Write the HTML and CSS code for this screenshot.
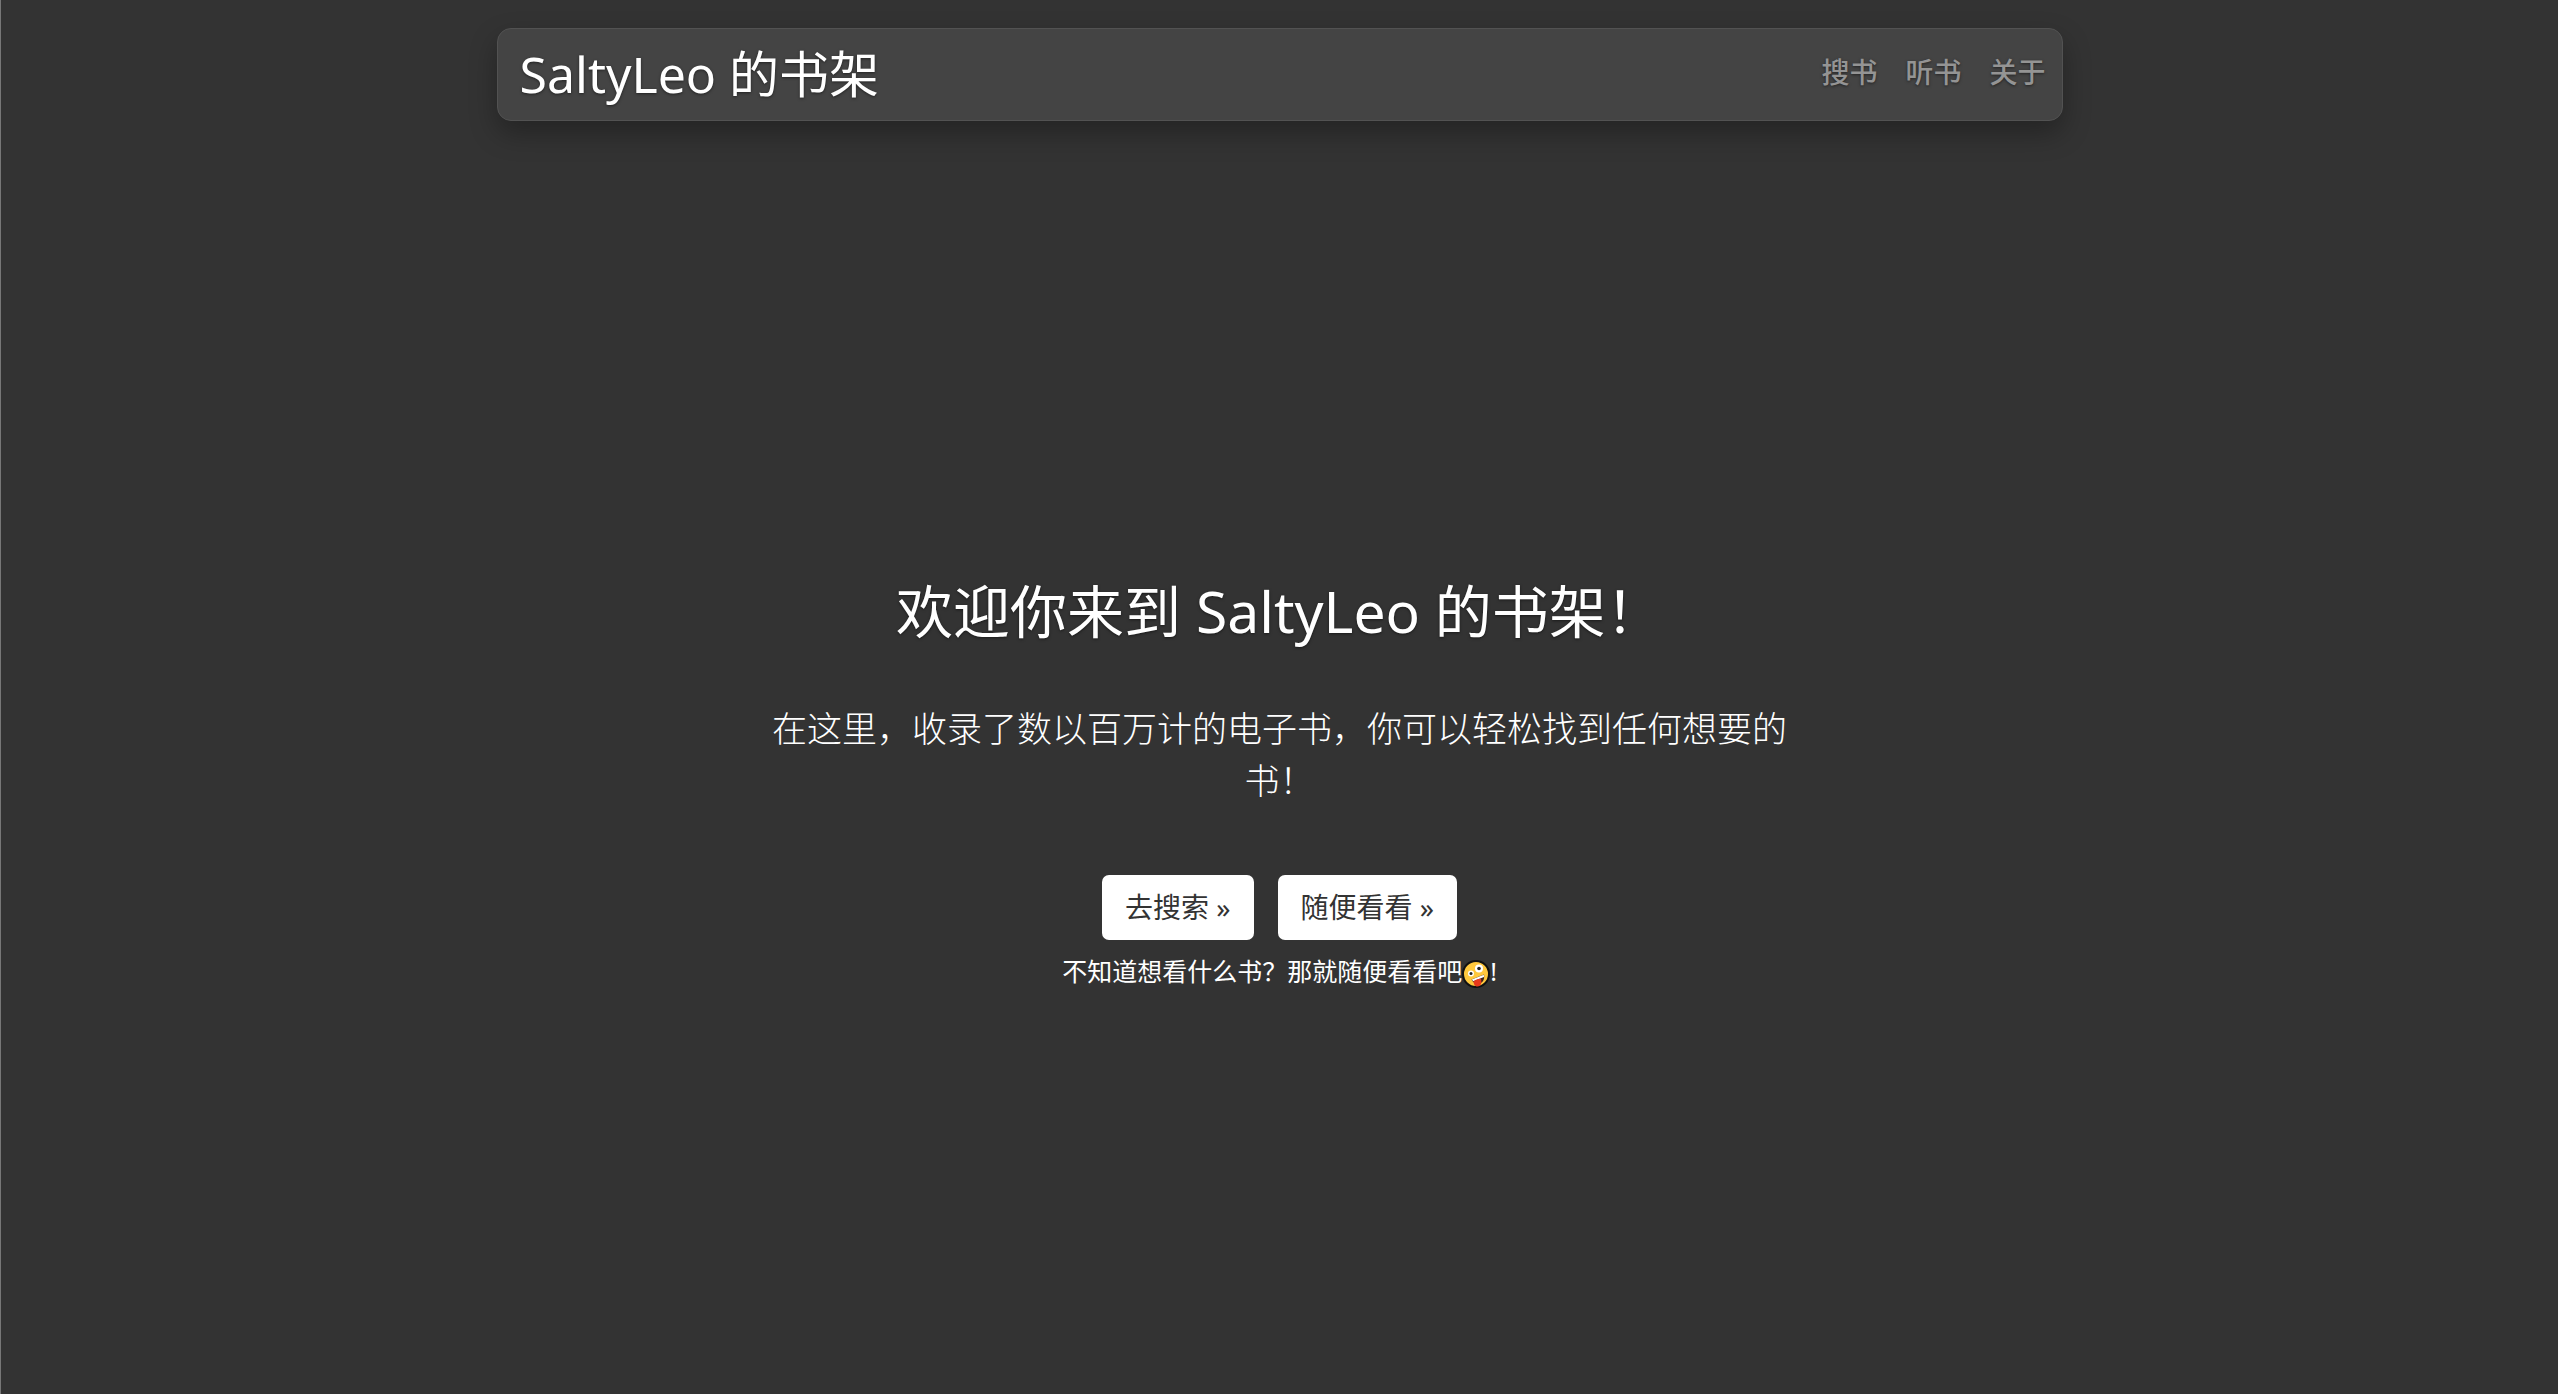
FILE: index.html
```html
<!DOCTYPE html>
<html lang="zh-CN">
<head>
  <meta charset="UTF-8" />
  <meta name="viewport" content="width=device-width, initial-scale=1.0"/>
  <title>SaltyLeo 的书架</title>
  <link rel="stylesheet" href="styles.css">
</head>
<body>

  <header class="navbar">
    <a class="brand" href="#">SaltyLeo 的书架</a>
    <nav class="nav-links">
      <a href="#search">搜书</a>
      <a href="#listen">听书</a>
      <a href="#about">关于</a>
    </nav>
  </header>

  <main class="cover">
    <h1>欢迎你来到 SaltyLeo 的书架！</h1>
    <p class="lead">在这里，收录了数以百万计的电子书，你可以轻松找到任何想要的书！</p>
    <div class="actions">
      <a class="btn" href="#search">去搜索 »</a>
      <a class="btn" href="#random">随便看看 »</a>
    </div>
    <p class="hint">不知道想看什么书？那就随便看看吧<svg class="emoji" viewBox="0 0 28 28" aria-hidden="true">
      <circle cx="14" cy="14" r="13" fill="#ffc83d" stroke="#111" stroke-width="2"/>
      <circle cx="9" cy="13.5" r="3" fill="#fff"/>
      <circle cx="9" cy="13.5" r="1.5" fill="#222"/>
      <circle cx="17" cy="8.5" r="4" fill="#fff"/>
      <circle cx="17" cy="8.5" r="1.8" fill="#222"/>
      <path d="M9.5 19.5 L22 14.5 C23 20 20 23 17 23.5 C13.5 24 11 22.5 9.5 19.5 Z" fill="#3a2419"/>
      <path d="M9.8 19.5 L21.8 14.7 L22 17 L11.2 21.3 Z" fill="#fff"/>
      <path d="M11.5 21.5 C14 19.5 17 18.5 19 19 C20 22 19 26.5 15.5 26.5 C12.5 26.5 11.8 24 11.5 21.5 Z" fill="#e8391c"/>
    </svg>!</p>
  </main>

</body>
</html>
```
FILE: styles.css
```css
* {
  box-sizing: border-box;
}

body {
  display: flex;
  flex-direction: column;
  align-items: center;
  min-height: 100vh;
  margin: 0;
  padding: 28px;
  background-color: #333;
  border-left: 1px solid #777;
  color: #fff;
  font-family: "Noto Sans", "Noto Sans CJK SC", sans-serif;
  text-align: center;
  text-shadow: 0 1px 3px rgba(0, 0, 0, 0.5);
}

a {
  color: inherit;
  text-decoration: none;
}

.navbar {
  display: flex;
  justify-content: space-between;
  align-items: center;
  flex-wrap: wrap;
  width: 100%;
  max-width: 1566px;
  padding: 10px 16px 10px 22px;
  background-color: #444;
  border: 1px solid #525252;
  border-radius: 14px;
  box-shadow: 0 12px 28px rgba(0, 0, 0, 0.3);
}

.brand {
  font-size: 50px;
  line-height: 71px;
}

.nav-links {
  display: flex;
  gap: 28px;
  padding-bottom: 6px;
  color: #949494;
  font-size: 28px;
  font-weight: 500;
  line-height: 42px;
}

.cover {
  width: 100%;
  max-width: 1050px;
  margin: auto;
  padding-top: 80px;
}

h1 {
  margin: 0 0 58px;
  font-size: 57px;
  font-weight: 400;
  line-height: 68px;
}

.lead {
  margin: 0 0 68px;
  font-size: 35px;
  font-weight: 300;
  line-height: 52px;
  text-shadow: none;
}

.actions {
  display: flex;
  justify-content: center;
  flex-wrap: wrap;
  gap: 24px;
}

.btn {
  padding: 11px 23px;
  background-color: #fff;
  border-radius: 7px;
  color: #333;
  font-size: 28px;
  line-height: 43px;
  text-shadow: none;
}

.hint {
  margin: 12px 0 0;
  font-size: 25px;
  line-height: 38px;
  text-shadow: none;
}

.emoji {
  width: 28px;
  height: 28px;
  vertical-align: middle;
}
```
